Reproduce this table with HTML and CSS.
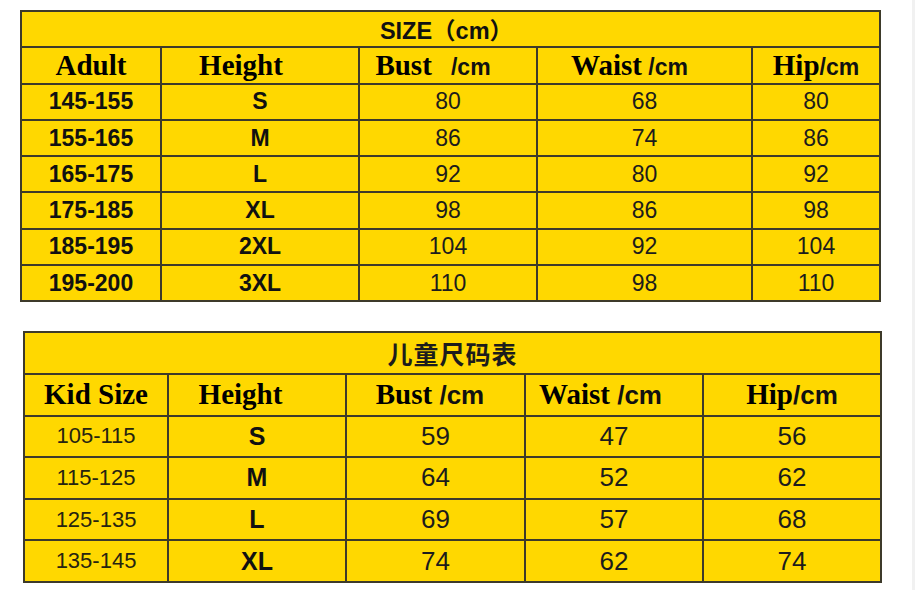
FILE: index.html
```html
<!DOCTYPE html>
<html lang="en">
<head>
<meta charset="utf-8">
<title>Size Chart</title>
<link rel="stylesheet" href="styles.css">
</head>
<body>
<main class="sheet">
  <table class="chart chart-adult">
    <colgroup>
      <col class="c1"><col class="c2"><col class="c3"><col class="c4"><col class="c5">
    </colgroup>
    <tr class="row-title"><td colspan="5" class="title">SIZE（cm）</td></tr>
    <tr class="row-head">
      <td class="head">Adult</td>
      <td class="head shift-h1">Height</td>
      <td class="head shift-b1"><span class="serif">Bust</span><span class="unit">   /cm</span></td>
      <td class="head shift-w1"><span class="serif">Waist</span><span class="unit"> /cm</span></td>
      <td class="head"><span class="serif">Hip</span><span class="unit">/cm</span></td>
    </tr>
    <tr><td class="strong">145-155</td><td class="strong">S</td><td>80</td><td>68</td><td>80</td></tr>
    <tr><td class="strong">155-165</td><td class="strong">M</td><td>86</td><td>74</td><td>86</td></tr>
    <tr><td class="strong">165-175</td><td class="strong">L</td><td>92</td><td>80</td><td>92</td></tr>
    <tr><td class="strong">175-185</td><td class="strong">XL</td><td>98</td><td>86</td><td>98</td></tr>
    <tr><td class="strong">185-195</td><td class="strong">2XL</td><td>104</td><td>92</td><td>104</td></tr>
    <tr><td class="strong">195-200</td><td class="strong">3XL</td><td>110</td><td>98</td><td>110</td></tr>
  </table>

  <table class="chart chart-kid">
    <colgroup>
      <col class="k1"><col class="k2"><col class="k3"><col class="k4"><col class="k5">
    </colgroup>
    <tr class="row-title"><td colspan="5" class="title title-cjk">儿童尺码表</td></tr>
    <tr class="row-head">
      <td class="head">Kid Size</td>
      <td class="head shift-h2">Height</td>
      <td class="head shift-b2"><span class="serif">Bust</span><span class="unit"> /cm</span></td>
      <td class="head shift-w2"><span class="serif">Waist</span><span class="unit"> /cm</span></td>
      <td class="head"><span class="serif">Hip</span><span class="unit">/cm</span></td>
    </tr>
    <tr><td class="range">105-115</td><td class="strong">S</td><td>59</td><td>47</td><td>56</td></tr>
    <tr><td class="range">115-125</td><td class="strong">M</td><td>64</td><td>52</td><td>62</td></tr>
    <tr><td class="range">125-135</td><td class="strong">L</td><td>69</td><td>57</td><td>68</td></tr>
    <tr><td class="range">135-145</td><td class="strong">XL</td><td>74</td><td>62</td><td>74</td></tr>
  </table>
</main>
</body>
</html>
```

FILE: styles.css
```css
html {
  background: #ffffff linear-gradient(to right, transparent 912px, #f1f1f1 912px, #f1f1f1 915px, transparent 915px);
}

body {
  margin: 0;
  font-family: "Liberation Sans", Arial, "Noto Sans CJK SC", sans-serif;
  color: #1c1c1c;
}

.sheet {
  display: flex;
  flex-direction: column;
  align-items: flex-start;
  padding: 10px 0 0 20px;
}

.chart {
  border-collapse: collapse;
  table-layout: fixed;
  background: #ffd800;
}

.chart td {
  border: 2px solid #3d3a2a;
  text-align: center;
  vertical-align: middle;
  padding: 0;
  white-space: pre;
  overflow: visible;
}

/* ---------- adult table ---------- */
.chart-adult {
  width: 859px;
}
.chart-adult .c1 { width: 140px; }
.chart-adult .c2 { width: 198px; }
.chart-adult .c3 { width: 178px; }
.chart-adult .c4 { width: 215px; }
.chart-adult .c5 { width: 128px; }

.chart-adult tr { height: 36.3px; }
.chart-adult td { font-size: 23px; }

.chart-adult .title {
  font-weight: bold;
  font-size: 23.5px;
  padding-right: 8px;
  color: #111;
  font-family: "Liberation Sans", Arial, "Noto Sans CJK SC", sans-serif;
}

/* ---------- kid table ---------- */
.chart-kid {
  width: 857px;
  margin: 29px 0 0 3px;
}
.chart-kid .k1 { width: 144px; }
.chart-kid .k2 { width: 178px; }
.chart-kid .k3 { width: 179px; }
.chart-kid .k4 { width: 178px; }
.chart-kid .k5 { width: 178px; }

.chart-kid tr { height: 41.6px; }
.chart-kid td { font-size: 26px; }
.chart-kid .title-cjk {
  font-family: "Noto Sans CJK SC", sans-serif;
  font-weight: bold;
  font-size: 25px;
  letter-spacing: 1px;
}
.chart-kid .unit { font-size: 26px; }
.chart-kid .strong { font-size: 25px; }

/* ---------- shared cell styles ---------- */
.head {
  font-family: "Liberation Serif", "Times New Roman", serif;
  font-weight: bold;
  font-size: 29px !important;
  color: #000;
}
.head .serif {
  font-family: "Liberation Serif", "Times New Roman", serif;
}
.unit {
  font-family: "Liberation Sans", Arial, sans-serif;
  font-weight: bold;
  font-size: 23px;
  color: #111;
}

.strong {
  font-weight: bold;
  color: #111;
}
.range {
  font-size: 22px !important;
  color: #262410;
}

/* header centring offsets as in the source sheet */
.shift-h1 { padding-right: 38px !important; }
.shift-b1 { padding-right: 30px !important; }
.shift-w1 { padding-right: 30px !important; }
.shift-h2 { padding-right: 33px !important; }
.shift-b2 { padding-right: 11px !important; }
.shift-w2 { padding-right: 27px !important; }
```
